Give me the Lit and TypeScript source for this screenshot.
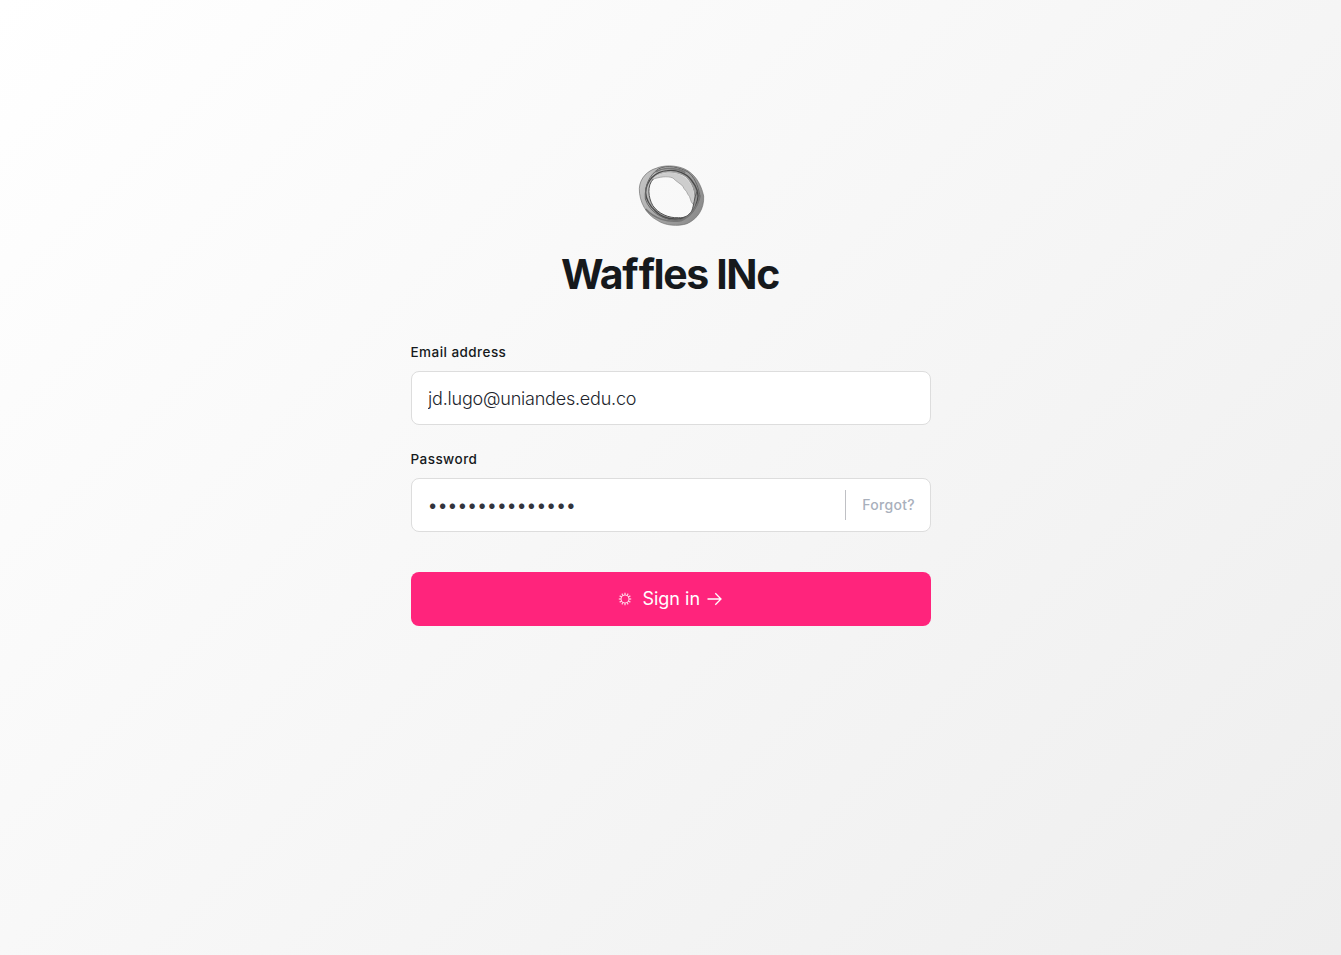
import { LitElement, html, css, svg } from "lit";
import { customElement, state } from "lit/decorators.js";

@customElement("brand-ring")
export class BrandRing extends LitElement {
  static styles = css`
    :host { display: block; width: 84px; height: 80px; margin-left: 2px; }
    svg { display: block; }
  `;
  render() {
    return html`<svg width="84" height="80" viewBox="0 0 252 240" fill="none" aria-hidden="true">
      <defs>
        <linearGradient id="band" x1="28" y1="70" x2="222" y2="170" gradientUnits="userSpaceOnUse">
          <stop offset="0" stop-color="#c6c6c6" />
          <stop offset=".5" stop-color="#a2a2a2" />
          <stop offset="1" stop-color="#8a8a8a" />
        </linearGradient>
      </defs>
      <path fill="url(#band)" fill-rule="evenodd" d="M28 100C30 68 54 47 78 40C100 30 138 30 164 42C194 56 213 86 221 123C223 163 202 192 171 206C143 215 105 212 82 196C49 179 27 140 28 100ZM67 74C53 94 54 125 68 151C84 174 113 190 146 189C170 189 185 174 190 151C197 128 193 92 167 67C139 48 88 48 67 74Z"/>
      <path fill="#cdcdcd" d="M67 73C88 50 132 48 157 62C183 76 199 109 190 149C179 139 183 126 173 117C170 106 161 104 159 94C149 84 139 80 129 69C112 62 88 66 67 73Z"/>
      <path stroke="#929292" stroke-width="2" d="M67 73C88 66 112 62 129 69C139 80 149 84 159 94C161 104 170 106 173 117C183 126 179 139 190 149"/>
      <path stroke="#6c6c6c" stroke-width="2" d="M28 100C30 68 54 47 78 40C100 30 138 30 164 42C194 56 213 86 221 123C223 163 202 192 171 206C143 215 105 212 82 196C49 179 27 140 28 100Z"/>
      <path stroke="#4a4a4a" stroke-width="4" d="M47 113C48 78 75 49 112 47C143 43 171 57 184 75C199 94 208 118 202 137C196 163 180 184 157 190C128 195 98 191 77 169C59 152 48 134 47 113Z"/>
      <path stroke="#666" stroke-width="3" d="M46 132C43 91 59 60 85 42C112 27 151 38 174 51C191 63 204 90 209 119C208 151 184 186 145 196C104 198 59 173 46 132Z"/>
      <path stroke="#555" stroke-width="3" d="M70 72C50 92 55 128 68 151C84 176 117 190 145 188C165 190 180 180 186 167C192 149 191 133 203 105"/>
      <path stroke="#777" stroke-width="5" d="M47 162C72 190 113 204 153 197C184 184 201 158 211 121M76 51C104 34 146 40 166 53"/>
    </svg>`;
  }
}

@customElement("app-root")
export class AppRoot extends LitElement {
  static styles = css`
    :host { display: block; font-family: Inter, "Liberation Sans", sans-serif; font-optical-sizing: none; color: #16191c; }
    * { box-sizing: border-box; }
    .page { min-height: 100vh; padding-top: 155px; background: linear-gradient(135deg, #fff 0%, #eee 100%); }
    .panel { width: 520px; margin-left: 411px; display: flex; flex-direction: column; }
    .brand { display: flex; flex-direction: column; align-items: center; }
    .title { margin: 13px 2px 0 0; font-size: 41px; line-height: 52px; font-weight: 700; letter-spacing: -1.4px; white-space: nowrap; }
    .loose { letter-spacing: .1px; }
    .form { display: flex; flex-direction: column; margin-top: 42px; }
    .label { font-size: 13.5px; line-height: 20px; font-weight: 550; letter-spacing: .45px; margin: 0 0 9px -.5px; }
    .field { height: 54px; display: flex; align-items: center; background: #fff; border: 1px solid #ddd; border-radius: 8px; margin-bottom: 24px; }
    .input { flex: 1; min-width: 0; height: 52px; padding: 0 16px; border: 0; outline: 0; background: transparent; font: 300 18px/24px Inter, "Liberation Sans", sans-serif; font-optical-sizing: none; letter-spacing: -.21px; color: #22242c; }
    .secret { font-size: 20px; letter-spacing: -1.37px; padding: 0 16px 0 15px; color: #33343c; }
    .forgot { height: 30px; display: flex; align-items: center; padding: 0 15px 2px 16px; border-left: 1px solid #bfc0c4; color: #a9b0bc; font-size: 14px; font-weight: 500; letter-spacing: .3px; }
    .submit { height: 54px; margin-top: 16px; border: 0; border-radius: 8px; padding: 0 2px 0 0; display: flex; align-items: center; justify-content: center; background: #ff247c; color: #fff; font: 400 18px/24px Inter, "Liberation Sans", sans-serif; font-optical-sizing: none; letter-spacing: 0; }
    .spinner { margin-right: 10px; }
    .arrow { margin-left: 6.5px; }
  `;

  @state() private email = "jd.lugo@uniandes.edu.co";
  @state() private password = "•".repeat(15);

  render() {
    return html`<main class="page">
      <div class="panel">
        <header class="brand">
          <brand-ring></brand-ring>
          <h1 class="title">Wa<span class="loose">f</span>fles INc</h1>
        </header>
        <form class="form" @submit=${(e: Event) => e.preventDefault()}>
          <label class="label" for="email">Email address</label>
          <div class="field"><input class="input" id="email" .value=${this.email} /></div>
          <label class="label" for="password">Password</label>
          <div class="field">
            <input class="input secret" id="password" type="password" .value=${this.password} />
            <span class="forgot">Forgot?</span>
          </div>
          <button class="submit">
            <svg class="spinner" width="14" height="14" viewBox="0 0 14 14" stroke="#fff" stroke-opacity=".75" stroke-width="1.3">
              ${Array.from({ length: 12 }, (_, i) => svg`<path d="M7 .8V3.3" transform="rotate(${i * 30} 7 7)" />`)}
              <circle cx="7" cy="7" r="4" fill="none" stroke-opacity=".6" stroke-width="1" />
            </svg>
            <span>Sign in</span>
            <svg class="arrow" width="15" height="14" viewBox="0 0 15 14" fill="none" stroke="#fff" stroke-width="1.3"><path d="M.5 7H14M8.3 1.2L14 7L8.3 12.8" /></svg>
          </button>
        </form>
      </div>
    </main>`;
  }
}
